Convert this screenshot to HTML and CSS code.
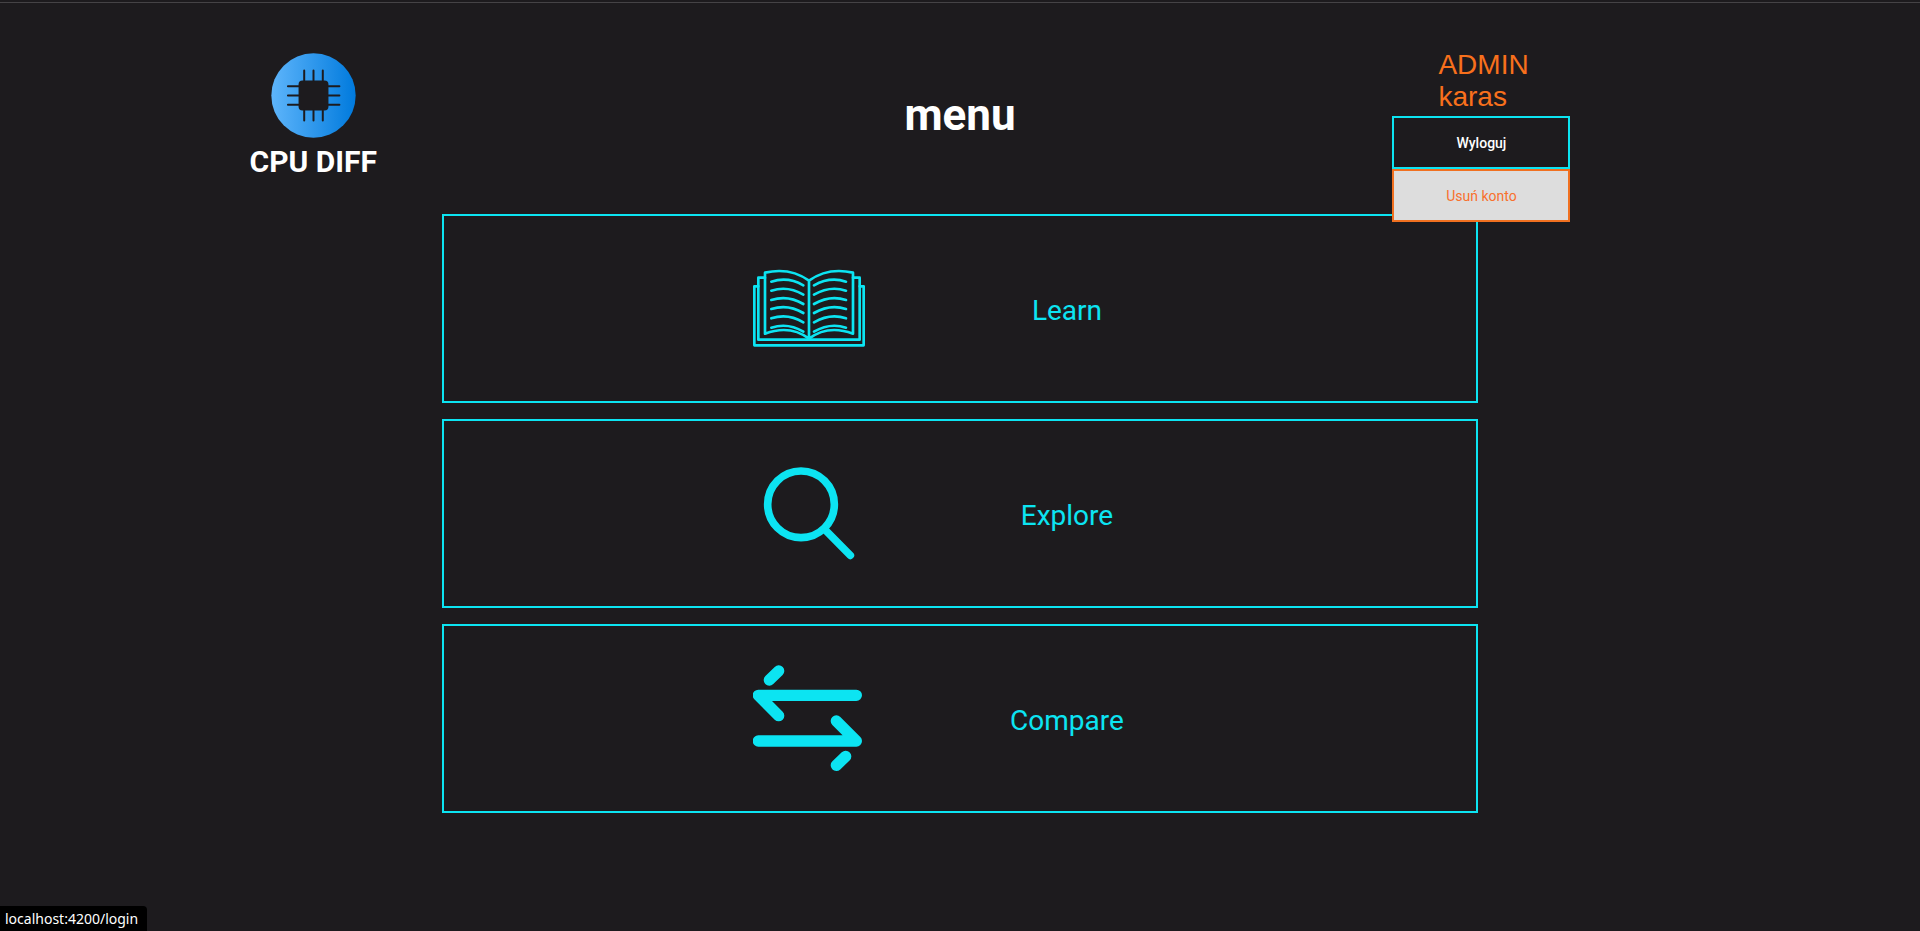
FILE: index.html
```html
<!DOCTYPE html>
<html lang="pl">
<head>
<meta charset="utf-8">
<title>CPU DIFF</title>
<link rel="stylesheet" href="styles.css">
</head>
<body>
<header class="header">
  <div class="logo">
    <svg class="logo-mark" viewBox="0 0 256 256" aria-hidden="true">
      <defs>
        <linearGradient id="disc" x1="0" x2="1" y1="0" y2="0">
          <stop offset="0" stop-color="#5eb5fb"/>
          <stop offset="1" stop-color="#007add"/>
        </linearGradient>
      </defs>
      <circle cx="128" cy="128" r="127" fill="url(#disc)"/>
      <rect x="83" y="83" width="90" height="90" rx="12" fill="#1d1b1e"/>
      <path d="M100 53V83M128 53V83M156 53V83M100 173V203M128 173V203M156 173V203M51 100H83M51 128H83M51 156H83M173 100H206M173 128H206M173 156H206" stroke="#1d1b1e" stroke-width="6" stroke-linecap="round"/>
    </svg>
    <span class="logo-text">CPU DIFF</span>
  </div>
  <h1 class="title">menu</h1>
  <div class="user">
    <p class="user-name">ADMIN<br>karas</p>
    <div class="user-actions">
      <button class="action" type="button">Wyloguj</button>
      <button class="action action-danger" type="button">Usuń konto</button>
    </div>
  </div>
</header>
<main class="menu">
  <a class="card" href="#learn">
    <svg class="icon" viewBox="39 7 336 336" fill="none" stroke="#0ce4f2" stroke-width="8" stroke-linecap="round" stroke-linejoin="round" aria-hidden="true">
      <path d="M75 69Q150 52 207 93Q264 52 339 69V252Q264 224 207 267Q150 224 75 252ZM207 93V267"/>
      <path d="M75 84H55V270H359V84H339"/>
      <path d="M55 110H43V287H371V110H359"/>
      <path d="M94 96Q144 80 190 107M94 123Q144 107 190 135M94 151Q144 135 190 163M94 178Q144 162 190 190M94 206Q144 190 190 218M94 234Q144 218 190 246"/>
      <path d="M318 96Q270 80 222 107M318 123Q270 107 222 135M318 151Q270 135 222 163M318 178Q270 162 222 190M318 206Q270 190 222 218M318 234Q270 218 222 246"/>
    </svg>
    <span class="label">Learn</span>
  </a>
  <a class="card" href="#explore">
    <svg class="icon" viewBox="39 22 336 336" fill="none" stroke="#0ce4f2" stroke-width="23" stroke-linecap="round" aria-hidden="true">
      <circle cx="183" cy="164" r="100"/>
      <path d="M257 242L331 317"/>
    </svg>
    <span class="label">Explore</span>
  </a>
  <a class="card" href="#compare">
    <svg class="icon" viewBox="39 37 336 336" fill="none" stroke="#0ce4f2" stroke-width="34" stroke-linecap="round" stroke-linejoin="round" aria-hidden="true">
      <path d="M116 64L88 91M349 137H55L116 198M55 274H349L289 214M317 320L289 347"/>
    </svg>
    <span class="label">Compare</span>
  </a>
</main>
<div class="status">localhost:4200/login</div>
</body>
</html>
```
FILE: styles.css
```css
* {
  box-sizing: border-box;
}

body {
  margin: 0;
  min-height: 100vh;
  background: #1d1b1e;
  font-family: Roboto, "Liberation Sans", sans-serif;
}

body::before {
  content: "";
  display: block;
  height: 2px;
  border-bottom: 1px solid #454346;
}

.header {
  display: grid;
  grid-template-columns: 1fr auto 1fr;
  align-items: start;
  padding: 46px 13% 36px;
}

.logo {
  justify-self: start;
  display: flex;
  flex-direction: column;
  align-items: center;
  gap: 8px;
  padding-top: 4px;
}

.logo-mark {
  width: 85px;
  height: 85px;
}

.logo-text {
  color: #fff;
  font-size: 30px;
  font-weight: 700;
  line-height: 32px;
}

.title {
  margin: 0;
  padding-top: 38px;
  color: #fff;
  font-size: 44px;
  font-weight: 700;
  line-height: 56px;
}

.user {
  position: relative;
  justify-self: end;
  width: 178px;
  margin-right: 100px;
}

.user-name {
  margin: 0;
  padding-left: 46px;
  color: #f8701c;
  font-family: "Liberation Sans", Arial, sans-serif;
  font-size: 28px;
  line-height: 32px;
}

.user-actions {
  position: absolute;
  top: 100%;
  left: 0;
  right: 0;
  z-index: 1;
  padding-top: 3px;
}

.action {
  display: block;
  width: 100%;
  height: 53px;
  border: 2px solid #0ce4f2;
  background: #1d1b1e;
  color: #fff;
  font: 500 14px Roboto, sans-serif;
}

.action-danger {
  border-color: #f07020;
  background: #ddd;
  color: #f8702c;
  font-weight: 400;
}

.menu {
  display: grid;
  gap: 16px;
  width: 54%;
  margin: 0 auto;
}

.card {
  display: flex;
  align-items: center;
  justify-content: center;
  gap: 102px;
  padding: 36px 0 37px;
  border: 2px solid #0ce4f2;
  color: #0ce4f2;
  text-decoration: none;
}

.icon {
  width: 112px;
  height: 112px;
}

.label {
  width: 200px;
  padding-top: 5px;
  font-size: 28px;
  line-height: 32px;
  text-align: center;
}

.status {
  position: fixed;
  left: 0;
  bottom: 0;
  padding: 3px 9px 2px 5px;
  border-top-right-radius: 4px;
  background: #000;
  color: #fff;
  font: 14px/20px "Noto Sans", "Open Sans", sans-serif;
}
```
